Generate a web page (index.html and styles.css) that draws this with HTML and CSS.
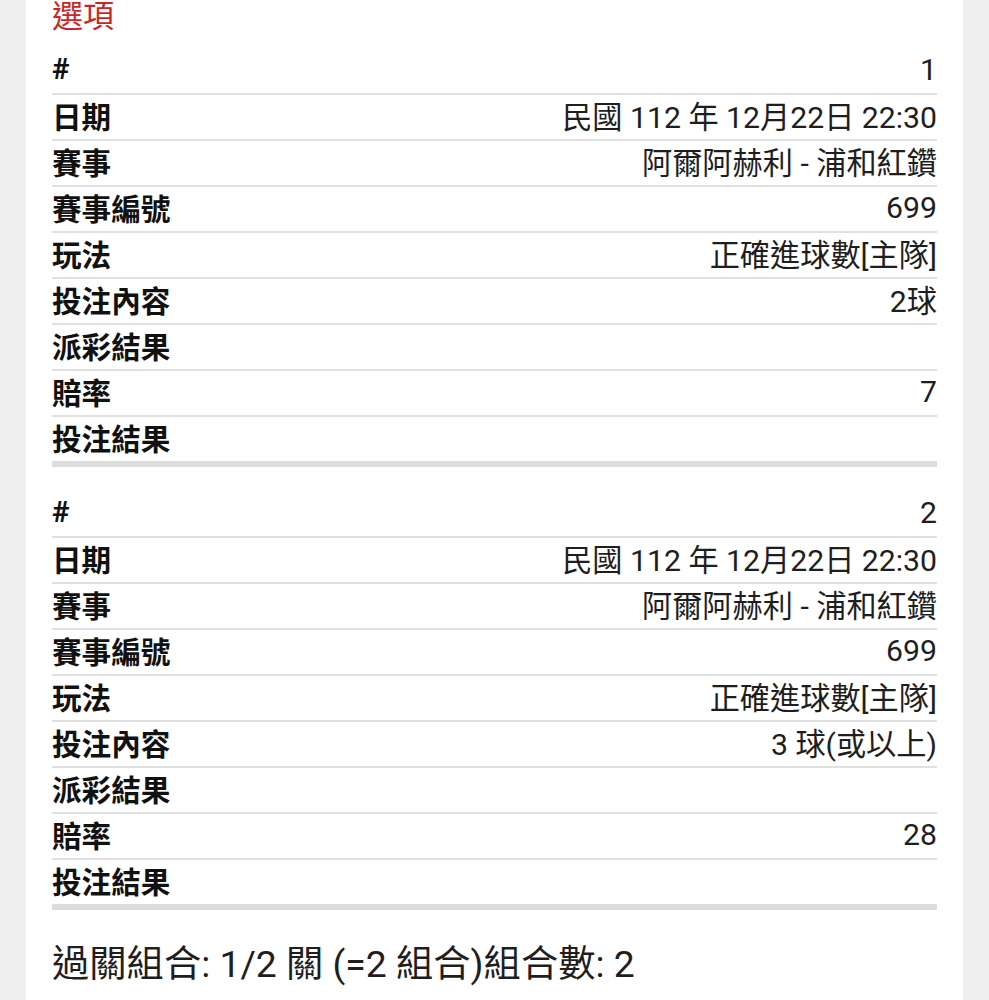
FILE: index.html
```html
<!DOCTYPE html>
<html lang="zh-Hant">
<head>
<meta charset="utf-8">
<link rel="stylesheet" href="styles.css">
</head>
<body>
<div class="card">
  <div class="title">選項</div>
  <div class="block">
    <div class="row"><span class="label">#</span><span class="value">1</span></div>
    <div class="row"><span class="label">日期</span><span class="value">民國 112 年 12月22日 22:30</span></div>
    <div class="row"><span class="label">賽事</span><span class="value">阿爾阿赫利 - 浦和紅鑽</span></div>
    <div class="row"><span class="label">賽事編號</span><span class="value">699</span></div>
    <div class="row"><span class="label">玩法</span><span class="value">正確進球數[主隊]</span></div>
    <div class="row"><span class="label">投注內容</span><span class="value">2球</span></div>
    <div class="row"><span class="label">派彩結果</span><span class="value"></span></div>
    <div class="row"><span class="label">賠率</span><span class="value">7</span></div>
    <div class="row last"><span class="label">投注結果</span><span class="value"></span></div>
  </div>
  <div class="block">
    <div class="row"><span class="label">#</span><span class="value">2</span></div>
    <div class="row"><span class="label">日期</span><span class="value">民國 112 年 12月22日 22:30</span></div>
    <div class="row"><span class="label">賽事</span><span class="value">阿爾阿赫利 - 浦和紅鑽</span></div>
    <div class="row"><span class="label">賽事編號</span><span class="value">699</span></div>
    <div class="row"><span class="label">玩法</span><span class="value">正確進球數[主隊]</span></div>
    <div class="row"><span class="label">投注內容</span><span class="value">3 球(或以上)</span></div>
    <div class="row"><span class="label">派彩結果</span><span class="value"></span></div>
    <div class="row"><span class="label">賠率</span><span class="value">28</span></div>
    <div class="row last"><span class="label">投注結果</span><span class="value"></span></div>
  </div>
  <div class="summary">過關組合: 1/2 關 (=2 組合)組合數: 2</div>
</div>
</body>
</html>
```
FILE: styles.css
```css
html, body {
  margin: 0;
  padding: 0;
  background: #eeeeee;
  font-family: Roboto, "Noto Sans CJK TC", sans-serif;
  color: #1a1a1a;
}
.card {
  background: #ffffff;
  margin: 0 26px;
  padding: 0 26px 40px;
  min-height: 1000px;
  box-sizing: border-box;
}
.title {
  color: #c62828;
  font-size: 31px;
  line-height: 34px;
  height: 34px;
  margin-bottom: 15px;
}
.block {
  margin-bottom: 25px;
}
.row {
  display: flex;
  justify-content: space-between;
  align-items: center;
  box-sizing: border-box;
  height: 46px;
  padding-bottom: 4px;
  border-bottom: 2px solid #e0e0e0;
  font-size: 30px;
}
.row.last {
  height: 50px;
  border-bottom: 6px solid #dddddd;
}
.label {
  font-weight: bold;
  font-size: 29.6px;
  color: #111;
}
.value {
  color: #1e1e1e;
  text-align: right;
  font-size: 30.2px;
}
.summary {
  font-size: 37.3px;
  line-height: 58px;
  color: #1e1e1e;
}
```
